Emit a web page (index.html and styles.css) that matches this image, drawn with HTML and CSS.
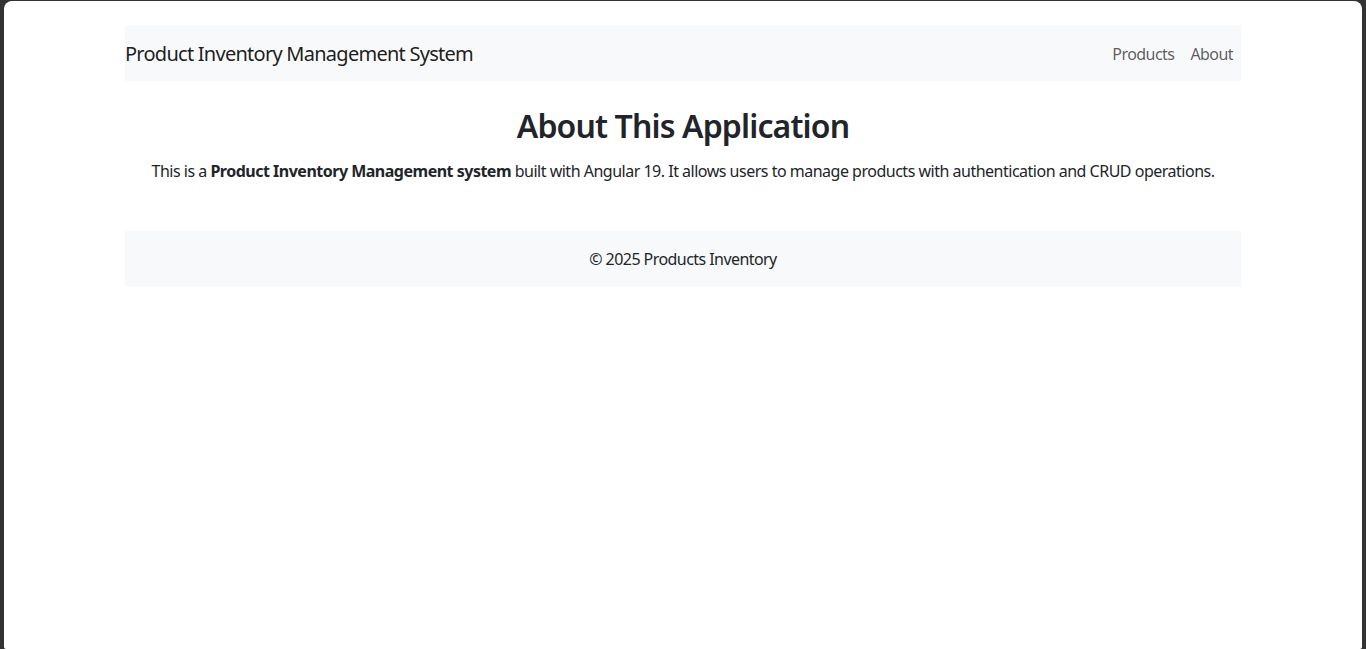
FILE: index.html
```html
<!DOCTYPE html>
<html lang="en">
<head>
<meta charset="utf-8">
<title>Product Inventory Management System</title>
<link rel="stylesheet" href="styles.css">
</head>
<body>
<div class="window">
  <div class="container">
    <nav class="navbar">
      <a class="brand" href="#">Product Inventory Management System</a>
      <ul class="nav">
        <li><a class="nav-link" href="#">Products</a></li>
        <li><a class="nav-link" href="#">About</a></li>
      </ul>
    </nav>
    <main class="about">
      <h1 class="title">About This Application</h1>
      <p class="lead-text">This is a <strong>Product Inventory Management system</strong> built with Angular 19. It allows users to manage products with authentication and CRUD operations.</p>
    </main>
    <footer class="footer">© 2025 Products Inventory</footer>
  </div>
</div>
</body>
</html>
```
FILE: styles.css
```css
html, body {
  margin: 0;
  padding: 0;
}
body {
  background: #333333;
  font-family: "Noto Sans", "Open Sans", sans-serif;
  font-size: 16px;
  line-height: 1.5;
  color: #212529;
  letter-spacing: -0.035em;
}
.window {
  margin: 1px 4px 0;
  min-height: 648px;
  background: #ffffff;
  border-radius: 8px 8px 2px 2px;
  overflow: hidden;
}
.container {
  width: 1116px;
  margin: 0 auto;
  padding-top: 24px;
}
.navbar {
  height: 56px;
  background: #f8f9fa;
  display: flex;
  align-items: center;
  justify-content: space-between;
}
.brand {
  font-size: 20px;
  line-height: 30px;
  padding-top: 2px;
  color: rgba(0, 0, 0, 0.9);
  text-decoration: none;
  letter-spacing: -0.037em;
}
.nav {
  list-style: none;
  margin: 0;
  padding: 0;
  display: flex;
}
.nav-link {
  display: block;
  padding: 9px 8px 7px;
  color: rgba(0, 0, 0, 0.65);
  text-decoration: none;
}
.about {
  text-align: center;
  padding-top: 26px;
}
.title {
  margin: 0 0 14px;
  font-size: 32px;
  line-height: 1.2;
  font-weight: 600;
  letter-spacing: -0.027em;
}
.lead-text {
  margin: 0;
  letter-spacing: -0.031em;
}
.lead-text strong {
  font-weight: 700;
}
.footer {
  margin-top: 48px;
  height: 56px;
  background: #f8f9fa;
  display: flex;
  align-items: center;
  justify-content: center;
}
```
